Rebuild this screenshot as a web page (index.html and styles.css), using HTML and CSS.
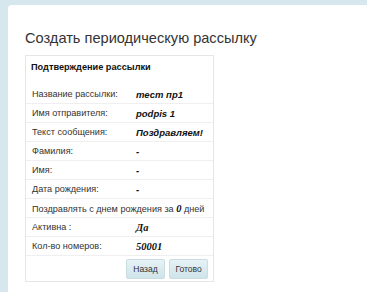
FILE: index.html
```html
<!DOCTYPE html>
<html lang="ru">
<head>
    <meta charset="UTF-8">
    <title>Создать периодическую рассылку</title>
    <link rel="stylesheet" href="styles.css">
</head>
<body>

<div class="page">
    <h1>Создать периодическую рассылку</h1>

    <!-- Confirmation box -->
    <div class="confirm">
        <div class="confirm-title">Подтверждение рассылки</div>
        <table class="confirm-table">
            <tr>
                <td class="label">Название рассылки:</td>
                <td class="value">тест пр1</td>
            </tr>
            <tr>
                <td class="label">Имя отправителя:</td>
                <td class="value">podpis 1</td>
            </tr>
            <tr>
                <td class="label">Текст сообщения:</td>
                <td class="value">Поздравляем!</td>
            </tr>
            <tr>
                <td class="label">Фамилия:</td>
                <td class="value">-</td>
            </tr>
            <tr>
                <td class="label">Имя:</td>
                <td class="value">-</td>
            </tr>
            <tr>
                <td class="label">Дата рождения:</td>
                <td class="value">-</td>
            </tr>
            <tr>
                <td class="label" colspan="2">Поздравлять с днем рождения за <b class="serif">0</b> дней</td>
            </tr>
            <tr>
                <td class="label">Активна :</td>
                <td class="value serif">Да</td>
            </tr>
            <tr>
                <td class="label">Кол-во номеров:</td>
                <td class="value serif">50001</td>
            </tr>
        </table>
        <div class="actions">
            <button type="button">Назад</button>
            <button type="button">Готово</button>
        </div>
    </div>
</div>

</body>
</html>
```

FILE: styles.css
```css
body {
    margin: 0;
    padding: 5px 0 0 8px;
    background-color: #d6e8ee;
    font-family: "Liberation Sans", Arial, sans-serif;
    color: #333;
}
.page {
    background-color: #fff;
    border-radius: 4px 0 0 0;
    padding: 24px 17px 20px 17px;
    min-height: 250px;
}
h1 {
    margin: 0 0 8px 0;
    font-size: 14.6px;
    font-weight: normal;
    line-height: 18px;
    color: #333;
}
.confirm {
    width: 187px;
    border: 1px solid #e6e6e6;
}
.confirm-title {
    font-size: 9.2px;
    font-weight: bold;
    color: #111;
    padding: 6px 5px 0 5px;
    height: 23px;
}
.confirm-table {
    width: 100%;
    border-collapse: collapse;
    font-size: 9.1px;
}
.confirm-table td {
    height: 18px;
    padding: 0 0 0 6px;
    border-bottom: 1px solid #efefef;
    white-space: nowrap;
}
.confirm-table .label {
    width: 98px;
    color: #333;
}
.confirm-table .value {
    font-size: 9.5px;
    font-weight: bold;
    font-style: italic;
    color: #111;
}
.confirm-table .serif,
.serif {
    font-family: "Liberation Serif", "Times New Roman", serif;
    font-weight: bold;
    font-style: italic;
    font-size: 10.5px;
    color: #111;
}
.actions {
    display: flex;
    justify-content: flex-end;
    gap: 4px;
    padding: 3px 5px 2px 0;
}
.actions button {
    font-family: "Liberation Sans", Arial, sans-serif;
    font-size: 8.5px;
    color: #333;
    width: 39px;
    height: 20px;
    padding: 0;
    border: 1px solid #c9dde3;
    border-radius: 2px;
    background: linear-gradient(#e6f2f6, #cfe4ea);
}
```
